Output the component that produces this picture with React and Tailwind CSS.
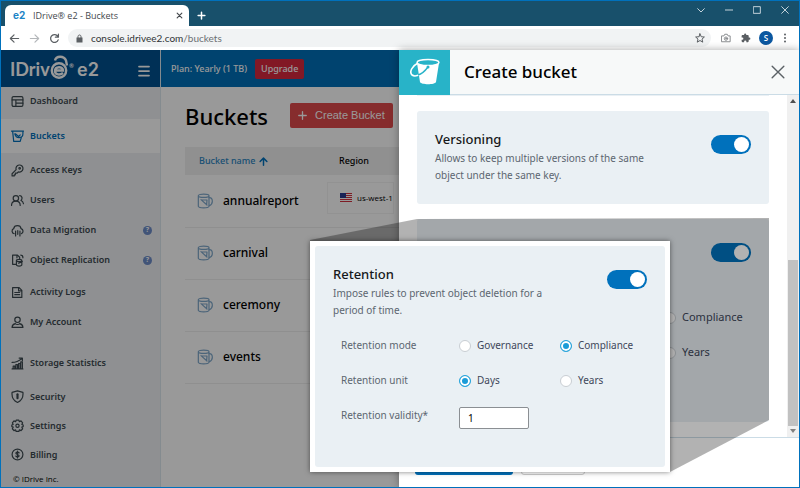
/**
 * App.jsx
 */
import React from 'react';

/* ---------- Icons ---------- */

function Icon({ size = 13, box = 24, stroke = 2, className = '', children }) {
  return (
    <svg
      width={size}
      height={size}
      viewBox={`0 0 ${box} ${box}`}
      fill="none"
      stroke="currentColor"
      strokeWidth={stroke}
      strokeLinecap="round"
      strokeLinejoin="round"
      className={`shrink-0 ${className}`}
      aria-hidden="true"
    >
      {children}
    </svg>
  );
}

const icons = {
  dashboard: (
    <>
      <rect x="2" y="3" width="20" height="18" rx="2.5" />
      <path d="M2 9h20M9 9v12M9 15h13" />
    </>
  ),
  bucket: (
    <>
      <path d="M1 2h22M3 2l2 19h12l2-7" />
      <path d="M7 7c1 4 4 7 8 7 4 0 7-3 7-7V3M8 7l6 5 3-3" />
    </>
  ),
  key: (
    <>
      <path d="M9.500 10.500a6.500 6.500 0 1 1 4 4L11 17H8v3H6v2H2v-4z" />
      <circle cx="16" cy="8" r="1.500" />
    </>
  ),
  users: (
    <>
      <circle cx="9" cy="8" r="5" />
      <path d="M1 21c0-5 3-8 8-8s8 3 8 8M16 3c4 0 6 5 2.500 9 2.500 1 4 3 4.500 6" />
    </>
  ),
  cloud: (
    <>
      <path d="M6 18a5 5 0 0 1-1-9.500C5.500 5 8.500 3 12 3s6 2 6.500 5.500A5 5 0 0 1 19 18" />
      <path d="M8.500 13v9M12.500 12v7M16.500 13v9" />
    </>
  ),
  replication: (
    <>
      <path d="M9 19H3V2h9l4 4v3M11 2v5M18 2c3 0 4 2 4 5" />
      <path d="M10 12v8c0 3 10 3 10 0v-8M10 12c0-3 10-3 10 0s-10 3-10 0M14 17l7-3" />
    </>
  ),
  logs: (
    <>
      <path d="M3 3h12l5 5v13H3zM14 3v6h6" />
      <path d="M7 12h9M7 16h9" />
    </>
  ),
  account: (
    <>
      <circle cx="12" cy="7" r="5" />
      <path d="M2 21c0-4 2-6 6-7 2 2 6 2 8 0 4 1 6 3 6 7z" />
    </>
  ),
  stats: (
    <>
      <path d="M2 22h20M4 22v-5h3v5M9 22v-8h3v8M14 22V12h3v10M18 22V9h3v13" />
      <path d="M2 10c7 0 12-2 18-7M15 2h6v5" />
    </>
  ),
  security: (
    <>
      <path d="M12 1.500l10 3c1 9-2 15-10 18.500C4 19.500 1 13.500 2 4.500z" />
      <path d="M12 8v7" strokeWidth="4" />
    </>
  ),
  settings: (
    <>
      <path d="M9.500 2h5l1 3 3-1.500 3 3.500-1.500 3 2.500 1v3l-2.500 1 1.500 3-3 3.500-3-1.500-1 3h-5l-1-3-3 1.500-3-3.500 1.500-3L1.500 14v-3L4 10 2.500 7l3-3.500L8.500 5z" />
      <circle cx="12" cy="12.500" r="3" />
    </>
  ),
  billing: (
    <>
      <circle cx="12" cy="12" r="10" />
      <path d="M15 9c-1-2-6-2-6 .5s6 2.500 6 5-5 2.500-6 .5M12 5.500v13" />
    </>
  ),
};

function BucketRowIcon() {
  return (
    <Icon size={16} stroke={1.800} className="text-[#7fa8cb]">
      <path d="M2 4c0-3 16-3 16 0v16c-1 3-15 3-16 0zM2 4c0 3.500 16 3.500 16 0" />
      <path d="M18.500 7c3 0 4.500 2 4.500 5.500 0 3-1.500 5.500-4.500 6.500" />
      <path d="M6 10l9 8M7 10.500h8l-.5 6" />
    </Icon>
  );
}

function DrawerBucket() {
  return (
    <svg width="30" height="28" viewBox="0 0 30 28" fill="none" aria-hidden="true">
      <path d="M7 5l3 19c1 3 15 3 16 0l3-19c-3 3-19 3-22 0z" fill="#fff" />
      <ellipse cx="18" cy="4.500" rx="11" ry="3" stroke="#fff" strokeWidth="1.400" />
      <path d="M8 5C2 8-1 14 2 17c4 3 12-2 16-8" stroke="#fff" strokeWidth="1.600" />
      <path d="M8 17c4-1 7-4 10-8" stroke="#28b3c8" strokeWidth="1.400" />
      <circle cx="18" cy="9" r="1.500" fill="#28b3c8" />
    </svg>
  );
}

function Logo() {
  return (
    <svg width="92" height="28" viewBox="0 0 92 28" role="img" aria-label="IDrive e2">
      <g fill="#fff" fontWeight="700">
        <text x="-1" y="21" fontSize="18" fontFamily="Lato, sans-serif">IDriv</text>
        <text x="66" y="21" fontSize="18" fontFamily="Inter, sans-serif" fontWeight="600">e2</text>
        <text x="58" y="13" fontSize="6" fontFamily="Lato, sans-serif">®</text>
      </g>
      <g fill="none" stroke="#fff" strokeWidth="2.400">
        <circle cx="48" cy="15.500" r="7.200" />
        <path d="M44 15.500h8c0-4.500-8-4.500-8 .5 0 4 5 4.500 8 2" />
        <path d="M44 5.500c1-5 9-5 11 0l1 5" />
      </g>
    </svg>
  );
}

/* ---------- Browser chrome ---------- */

function TitleBar() {
  return (
    <div className="flex h-[25px] shrink-0 items-end bg-[#18506b] pl-1 text-white">
      <div className="flex h-[21px] w-[184px] items-center rounded-t-md bg-white pr-1.5 pl-2 font-['Open_Sans',sans-serif] text-[9px] text-[#45494d]">
        <span className="w-5 font-['Inter',sans-serif] text-[10px] font-bold text-[#1c84c6]">e2</span>
        <span className="flex-1">IDrive® e2 - Buckets</span>
        <button type="button" aria-label="Close tab">
          <Icon size={7} stroke={4}><path d="M4 4l16 16M20 4L4 20" /></Icon>
        </button>
      </div>
      <button type="button" aria-label="New tab" className="mb-1.5 ml-2">
        <Icon size={9} stroke={4}><path d="M12 3v18M3 12h18" /></Icon>
      </button>
      <div className="mb-3 ml-auto flex gap-5 pr-2.5 text-[#c3d2da]">
        <button type="button" aria-label="Search tabs">
          <Icon size={8} stroke={3}><path d="M2 8l10 10L22 8" /></Icon>
        </button>
        <button type="button" aria-label="Minimize">
          <Icon size={8} stroke={3}><path d="M1 12h22" /></Icon>
        </button>
        <button type="button" aria-label="Maximize">
          <Icon size={8} stroke={3}><path d="M2 2h20v20H2z" /></Icon>
        </button>
        <button type="button" aria-label="Close window">
          <Icon size={8} stroke={3}><path d="M2 2l20 20M22 2L2 22" /></Icon>
        </button>
      </div>
    </div>
  );
}

function AddressBar() {
  return (
    <div className="flex h-6 shrink-0 items-center bg-white pr-2 pl-2 text-[#5b5f63]">
      <div className="flex gap-[9px]">
        <button type="button" aria-label="Back">
          <Icon size={11} stroke={2.600}><path d="M21 12H4M11 4l-8 8 8 8" /></Icon>
        </button>
        <button type="button" aria-label="Forward" className="text-[#b4b7ba]">
          <Icon size={11} stroke={2.600}><path d="M3 12h17M13 4l8 8-8 8" /></Icon>
        </button>
        <button type="button" aria-label="Reload">
          <Icon size={11} stroke={2.800}><path d="M20 15a8.500 8.500 0 1 1-2-9l2 2.500M20.500 2.500v6.500h-6.500" /></Icon>
        </button>
      </div>
      <div className="ml-2 flex h-[18px] flex-1 items-center rounded-full bg-[#f1f3f4] pr-1.5 pl-2">
        <svg width="7" height="9" viewBox="0 0 14 18" aria-hidden="true">
          <path d="M1 7h12v10H1z" fill="currentColor" />
          <path d="M4 8V5c0-4 6-4 6 0v3" fill="none" stroke="currentColor" strokeWidth="2" />
        </svg>
        <span className="ml-2 flex-1 font-['Lato',sans-serif] text-[10px] text-[#303336]">
          console.idrivee2.com<span className="text-[#6b6f73]">/buckets</span>
        </span>
        <button type="button" aria-label="Bookmark">
          <Icon size={10} stroke={2.400}>
            <path d="M12 2l3 7 7.500.6-5.700 5 1.800 7.400L12 18l-6.600 4 1.800-7.400-5.700-5L9 9z" />
          </Icon>
        </button>
      </div>
      <button type="button" aria-label="Capture" className="ml-2.5 text-[#8b8e91]">
        <Icon size={10} stroke={2.400}>
          <path d="M2 7h5l2-4h6l2 4h5v14H2z" />
          <circle cx="12" cy="13.500" r="4" />
          <circle cx="12" cy="13.500" r="1" />
        </Icon>
      </button>
      <button type="button" aria-label="Extensions" className="ml-2.5">
        <svg width="10" height="10" viewBox="0 0 24 24" fill="currentColor" aria-hidden="true">
          <path d="M20 11h-1.500V7c0-1-1-2-2-2h-4V3.500a2.500 2.500 0 0 0-5 0V5h-4c-1 0-2 1-2 2v4H3a2.700 2.700 0 0 1 0 5.400H1.500V20c0 1 1 2 2 2h4v-1.500a2.700 2.700 0 0 1 5.400 0V22h3.600c1 0 2-1 2-2v-4H20a2.500 2.500 0 0 0 0-5z" />
        </svg>
      </button>
      <button
        type="button"
        className="ml-2 flex h-3.5 w-3.5 items-center justify-center rounded-full bg-[#0b57a0] font-['Open_Sans',sans-serif] text-[8px] font-semibold text-white"
      >
        S
      </button>
      <button type="button" aria-label="Menu" className="ml-1.5">
        <svg width="12" height="12" viewBox="0 0 12 12" fill="currentColor" aria-hidden="true">
          <circle cx="6" cy="2.500" r="1" />
          <circle cx="6" cy="6" r="1" />
          <circle cx="6" cy="9.500" r="1" />
        </svg>
      </button>
    </div>
  );
}

/* ---------- Console page ---------- */

const navGroups = [
  {
    className: 'mt-0.5',
    row: 'h-[30px]',
    items: [
      { label: 'Access Keys', icon: 'key' },
      { label: 'Users', icon: 'users' },
      { label: 'Data Migration', icon: 'cloud', help: true },
      { label: 'Object Replication', icon: 'replication', help: true },
    ],
  },
  {
    className: 'mt-0.5',
    row: 'h-[30px]',
    items: [
      { label: 'Activity Logs', icon: 'logs' },
      { label: 'My Account', icon: 'account' },
    ],
  },
  {
    className: 'mt-[11px]',
    row: 'h-[30px]',
    items: [{ label: 'Storage Statistics', icon: 'stats' }],
  },
  {
    className: 'mt-1',
    row: 'h-[29px]',
    items: [
      { label: 'Security', icon: 'security' },
      { label: 'Settings', icon: 'settings' },
      { label: 'Billing', icon: 'billing' },
    ],
  },
];

function NavItem({ label, icon, help, className }) {
  return (
    <a href="#" className={`flex items-center gap-1.5 pr-2 pl-2.5 ${className}`}>
      <Icon size={13} stroke={2.200}>{icons[icon]}</Icon>
      <span className="flex-1">{label}</span>
      {help && (
        <span className="flex h-[9px] w-[9px] items-center justify-center rounded-full bg-[#6d8cc9] text-[7px] font-bold text-white">
          ?
        </span>
      )}
    </a>
  );
}

function Sidebar() {
  return (
    <aside className="flex w-40 shrink-0 flex-col border-r border-[#dce8ee] bg-[#eef1f3] text-[9px] font-semibold text-[#3d4950]">
      <div className="flex h-[37px] shrink-0 items-center justify-between bg-[#00508f] pr-2.5 pl-2.5 text-white">
        <Logo />
        <button type="button" aria-label="Toggle menu" className="mt-1">
          <Icon size={12} stroke={3.500}><path d="M2 3h20M2 12h20M2 21h20" /></Icon>
        </button>
      </div>
      <nav>
        <NavItem label="Dashboard" icon="dashboard" className="h-8 pb-1" />
        <NavItem label="Buckets" icon="bucket" className="h-[34px] bg-white text-[#0071bc]" />
        {navGroups.map((group) => (
          <div key={group.items[0].label} className={group.className}>
            {group.items.map((item) => (
              <NavItem key={item.label} {...item} className={group.row} />
            ))}
          </div>
        ))}
      </nav>
      <p className="mt-auto pb-0.5 pl-3 font-['Open_Sans',sans-serif] text-[8px] font-medium text-black">© IDrive Inc.</p>
    </aside>
  );
}

function Flag() {
  return (
    <svg width="12" height="9" viewBox="0 0 12 9" className="shrink-0" aria-hidden="true">
      <path d="M0 0h12v9H0z" fill="#fff" />
      <path d="M0 .5h12M0 2.500h12M0 4.500h12M0 6.500h12M0 8.500h12" stroke="#d22f3f" />
      <path d="M0 0h6v5H0z" fill="#2b3990" />
    </svg>
  );
}

const buckets = [
  { name: 'annualreport', region: 'us-west-1' },
  { name: 'carnival' },
  { name: 'ceremony' },
  { name: 'events' },
];

function BucketsPage() {
  return (
    <div className="flex min-w-0 flex-1 flex-col bg-white">
      <header className="flex h-[37px] shrink-0 items-center gap-2 bg-[#0070ba] pl-2.5 text-[9px] font-medium text-white">
        <span>Plan: Yearly (1 TB)</span>
        <button type="button" className="h-5 rounded-xs bg-[#d9283f] px-1.5">Upgrade</button>
      </header>
      <main className="pr-6 pl-6">
        <div className="flex items-center gap-[22px] pt-4">
          <h1 className="text-[22px] leading-6 font-medium text-black">Buckets</h1>
          <button
            type="button"
            className="flex h-[25px] items-center gap-2 rounded-xs bg-[#df4a4c] px-2 font-['Liberation_Sans',sans-serif] text-[11px] text-white"
          >
            <Icon size={9} stroke={3.500}><path d="M12 2v20M2 12h20" /></Icon>
            Create Bucket
          </button>
        </div>
        <table className="mt-[19px] w-full table-fixed text-left text-black">
          <thead>
            <tr className="h-7 bg-[#f0f0f0] text-[9px]">
              <th className="w-[142px] pl-3.5 font-medium text-[#2b84c0]">
                <button type="button" className="flex items-center gap-1">
                  Bucket name
                  <Icon size={9} stroke={4} className="text-[#0071bc]"><path d="M12 22V3M3 12l9-9 9 9" /></Icon>
                </button>
              </th>
              <th className="pl-3 font-medium">Region</th>
            </tr>
          </thead>
          <tbody>
            {buckets.map((bucket) => (
              <tr key={bucket.name} className="h-[52px] border-b border-[#eee]">
                <td className="pl-3">
                  <a href="#" className="flex items-center gap-2.5 text-xs font-medium">
                    <BucketRowIcon />
                    {bucket.name}
                  </a>
                </td>
                <td>
                  {bucket.region && (
                    <div className="mb-1.5 flex h-8 w-[67px] items-center gap-[5px] border border-[#f4f4f4] pl-3 font-['Open_Sans',sans-serif] text-[8px] font-medium whitespace-nowrap">
                      <Flag />
                      {bucket.region}
                    </div>
                  )}
                </td>
              </tr>
            ))}
          </tbody>
        </table>
      </main>
    </div>
  );
}

/* ---------- Drawer ---------- */

function Switch({ id, label }) {
  return (
    <input
      id={id}
      type="checkbox"
      role="switch"
      aria-label={label}
      defaultChecked
      className="relative mt-1.5 h-[19px] w-10 shrink-0 appearance-none rounded-full bg-[#0071bc] before:absolute before:top-0.5 before:right-0.5 before:h-[15px] before:w-[15px] before:rounded-full before:bg-white"
    />
  );
}

function SettingHeader({ id, title, children }) {
  return (
    <div className="flex items-start justify-between">
      <div>
        <label htmlFor={id} className="block text-[13px] leading-5 font-medium text-[#16181a]">{title}</label>
        <p className="mt-px w-[220px] text-[10px] leading-[17px] text-[#5c6670]">{children}</p>
      </div>
      <Switch id={id} />
    </div>
  );
}

function Option({ name, label, checked }) {
  return (
    <label className="flex items-center gap-1.5 text-[#40475a]">
      <input
        type="radio"
        name={name}
        defaultChecked={checked}
        className="h-3 w-3 shrink-0 appearance-none rounded-full border border-[#c9ced3] bg-white checked:border-[#2ba6dc] checked:bg-[#1b9cd8] checked:shadow-[inset_0_0_0_2px_white]"
      />
      {label}
    </label>
  );
}

function RetentionForm() {
  const row = 'grid h-[35px] grid-cols-[118px_101px_1fr] items-center';
  return (
    <div className="px-[18px] pt-[18px]">
      <SettingHeader id="retention" title="Retention">
        Impose rules to prevent object deletion for a period of time.
      </SettingHeader>
      <div className="mt-[9px] pl-2 text-[10px] text-[#5c6670]">
        <div className={row} role="radiogroup" aria-label="Retention mode">
          <span>Retention mode</span>
          <Option name="mode" label="Governance" />
          <Option name="mode" label="Compliance" checked />
        </div>
        <div className={row} role="radiogroup" aria-label="Retention unit">
          <span>Retention unit</span>
          <Option name="unit" label="Days" checked />
          <Option name="unit" label="Years" />
        </div>
        <div className={row}>
          <label htmlFor="validity">Retention validity*</label>
          <input
            id="validity"
            type="text"
            defaultValue="1"
            className="mt-1 h-[22px] w-[70px] rounded-xs border border-[#8b8f93] bg-white px-2 text-black"
          />
        </div>
      </div>
    </div>
  );
}

function CreateBucketDrawer() {
  return (
    <section className="absolute inset-y-0 right-0 flex w-[400px] flex-col bg-white shadow-[0_0_8px_rgba(0,0,0,0.35)]">
      <header className="flex h-[45px] shrink-0 items-center border-b border-[#cbdce6] bg-[#f7f9f9] pr-3.5">
        <div className="flex h-[45px] w-[51px] items-center justify-center bg-[#28b3c8]">
          <DrawerBucket />
        </div>
        <h2 className="flex-1 pl-3.5 text-[17px] font-medium text-black">Create bucket</h2>
        <button type="button" aria-label="Close" className="text-[#5b6166]">
          <Icon size={14} stroke={2.400}><path d="M2 2l20 20M22 2L2 22" /></Icon>
        </button>
      </header>

      <div className="flex min-h-0 flex-1">
        <div className="flex flex-1 flex-col gap-[15px] overflow-hidden pr-[18px] pl-[18px]">
          <div className="h-px shrink-0 bg-[#eaf0f4]" />
          <div className="h-[93px] shrink-0 rounded-[3px] bg-[#eaf0f4] px-[18px] pt-[18px]">
            <SettingHeader id="versioning" title="Versioning">
              Allows to keep multiple versions of the same object under the same key.
            </SettingHeader>
          </div>
          {/* Source card, mostly hidden behind the magnified one */}
          <div className="flex h-[203px] shrink-0 flex-col items-end rounded-[3px] bg-[#eaf0f4] px-[18px] pt-[18px]">
            <Switch label="Retention" />
            <div className="mt-[38px] w-[87px] text-[11px]">
              <div className="flex h-[35px] items-center">
                <Option name="source-mode" label="Compliance" />
              </div>
              <div className="flex h-[35px] items-center">
                <Option name="source-unit" label="Years" />
              </div>
            </div>
          </div>
        </div>
        {/* Scrollbar */}
        <div className="flex w-3 flex-col items-center justify-between bg-[#f0f0f0] py-1">
          <svg width="6" height="4" viewBox="0 0 6 4" aria-hidden="true"><path d="M0 4l3-4 3 4z" fill="#505050" /></svg>
          <div className="mt-auto mb-[3px] h-[166px] w-2.5 bg-[#c1c1c1]" />
          <svg width="6" height="4" viewBox="0 0 6 4" aria-hidden="true"><path d="M0 0l3 4 3-4z" fill="#808080" /></svg>
        </div>
      </div>

      <footer className="flex h-[50px] shrink-0 gap-2 border-t border-[#cbdce6] px-4 pt-2.5 pb-3">
        <button type="button" aria-label="Create" className="h-[27px] w-[98px] rounded-[3px] bg-[#0071bc]" />
        <button type="button" aria-label="Cancel" className="h-[27px] w-16 rounded-[3px] border border-[#ccc] bg-white" />
      </footer>

      {/* Shade that ties the magnified card to its source */}
      <svg
        width="460"
        height="256"
        viewBox="0 0 460 256"
        className="pointer-events-none absolute top-[168px] -left-[89px]"
        aria-hidden="true"
      >
        <path d="M0 22L107 1 459 0V202L360 254H0z" fill="#000" fillOpacity="0.300" />
      </svg>

      {/* Magnified card */}
      <div className="absolute top-[191px] -left-[89px] h-[231px] w-[360px] bg-white p-[5px] shadow-[0_0_5px_rgba(0,0,0,0.5)]">
        <div className="h-full rounded-[3px] bg-[#eaf0f4]">
          <RetentionForm />
        </div>
      </div>
    </section>
  );
}

export default function App() {
  return (
    <div className="flex h-screen flex-col overflow-hidden border border-[#0071bc] font-['Noto_Sans',sans-serif]">
      <TitleBar />
      <AddressBar />
      <div className="relative flex min-h-0 flex-1">
        <Sidebar />
        <BucketsPage />
        <div className="absolute inset-0 bg-black/40" />
        <CreateBucketDrawer />
      </div>
    </div>
  );
}
